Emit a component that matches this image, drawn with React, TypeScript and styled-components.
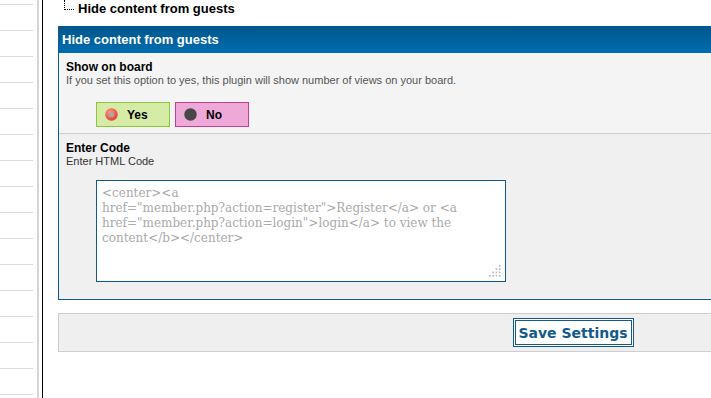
import React from "react";
import styled, { createGlobalStyle } from "styled-components";

const GlobalStyle = createGlobalStyle`
  html, body {
    margin: 0;
    padding: 0;
    background: #fff;
    overflow: hidden;
  }
  body {
    font-family: "Liberation Sans", Arial, sans-serif;
  }
`;

const sideItems = Array.from({ length: 17 }, (_, i) => i);

// word joiner after "?" keeps the url in one piece, like the original wrap
const htmlCode =
  '<center><a href="member.php?\u2060action=register">Register</a> or <a href="member.php?\u2060action=login">login</a> to view the content</b></center>';

const RadioIcon = ({ checked }: { checked: boolean }) =>
  checked ? (
    <svg width="13" height="13" viewBox="0 0 13 13">
      <defs>
        <radialGradient id="rg" cx="40%" cy="35%" r="70%">
          <stop offset="0%" stopColor="#ff9d8f" />
          <stop offset="100%" stopColor="#e2392b" />
        </radialGradient>
      </defs>
      <circle cx="6.5" cy="6.5" r="6.2" fill="url(#rg)" />
      <circle cx="6.5" cy="6.5" r="2.6" fill="#a9a9a9" />
    </svg>
  ) : (
    <svg width="13" height="13" viewBox="0 0 13 13">
      <circle cx="6.5" cy="6.5" r="6.2" fill="#474747" />
    </svg>
  );

const Grip = () => (
  <GripBox width="13" height="13" viewBox="0 0 13 13">
    {[0, 1, 2, 3].map((row) =>
      [0, 1, 2, 3]
        .filter((col) => col >= 3 - row)
        .map((col) => (
          <rect
            key={`${row}-${col}`}
            x={col * 3.3}
            y={row * 3.3}
            width="1.6"
            height="1.6"
            fill="#b5b5b5"
          />
        ))
    )}
  </GripBox>
);

const App = () => {
  return (
    <Page>
      <GlobalStyle />
      <Sidebar>
        <SideList>
          {sideItems.map((i) => (
            <SideItem key={i} />
          ))}
        </SideList>
      </Sidebar>
      <Main>
        <Crumb>
          <TreeLine />
          <CrumbText>Hide content from guests</CrumbText>
        </Crumb>

        <Panel>
          <PanelHeader>Hide content from guests</PanelHeader>

          <Row $bg="#f4f4f4" $divider>
            <Label>Show on board</Label>
            <Desc>If you set this option to yes, this plugin will show number of views on your board.</Desc>
            <Choices>
              <Choice $bg="#d5eba6" $border="#8cc63f">
                <RadioIcon checked />
                <span>Yes</span>
              </Choice>
              <Choice $bg="#eda9d7" $border="#c93d8c">
                <RadioIcon checked={false} />
                <span>No</span>
              </Choice>
            </Choices>
          </Row>

          <Row $bg="#f0f0f0">
            <Label>Enter Code</Label>
            <Desc $dark>Enter HTML Code</Desc>
            <CodeWrap>
              <CodeArea readOnly defaultValue={htmlCode} />
              <Grip />
            </CodeWrap>
          </Row>
        </Panel>

        <SaveBar>
          <SaveButton>Save Settings</SaveButton>
        </SaveBar>
      </Main>
    </Page>
  );
};

export default App;

const Page = styled.div`
  display: flex;
  width: 1200px;
  height: 398px;
`;

const Sidebar = styled.div`
  width: 37px;
  height: 100%;
  border-right: 2px solid #d7d7d7;
  margin-right: 3px;
  overflow: hidden;
`;

const SideList = styled.div`
  margin-top: -21px;
  width: 33px;
`;

const SideItem = styled.div`
  height: 25px;
  border-bottom: 1px solid #dcdcdc;
`;

const Main = styled.div`
  border-left: 1px solid #000;
  padding: 0 0 0 15px;
  width: 1030px;
`;

const Crumb = styled.div`
  display: flex;
  align-items: flex-start;
  height: 16px;
  padding-left: 6px;
`;

const TreeLine = styled.span`
  width: 9px;
  height: 9px;
  border-left: 1px dotted #000;
  border-bottom: 1px dotted #000;
  margin-right: 4px;
`;

const CrumbText = styled.span`
  font-size: 13px;
  font-weight: bold;
  line-height: 17px;
  color: #000;
`;

const Panel = styled.div`
  margin-top: 10px;
  border: 1px solid #0f5a8c;
  border-top: none;
`;

const PanelHeader = styled.div`
  height: 27px;
  line-height: 27px;
  padding-left: 3px;
  font-size: 13px;
  font-weight: bold;
  color: #fff;
  background: linear-gradient(to bottom, #02568a, #006db1);
`;

const Row = styled.div<{ $bg: string; $divider?: boolean }>`
  background: ${({ $bg }) => $bg};
  padding: 7px 7px ${({ $divider }) => ($divider ? "6px" : "17px")};
  border-bottom: ${({ $divider }) => ($divider ? "1px solid #cfcfcf" : "none")};
`;

const Label = styled.div`
  font-size: 12px;
  font-weight: bold;
  line-height: 14px;
  color: #000;
`;

const Desc = styled.div<{ $dark?: boolean }>`
  font-size: 11px;
  line-height: 13px;
  color: ${({ $dark }) => ($dark ? "#333" : "#555")};
`;

const Choices = styled.div`
  display: flex;
  gap: 5px;
  margin: 15px 0 0 30px;
`;

const Choice = styled.div<{ $bg: string; $border: string }>`
  display: flex;
  align-items: center;
  gap: 9px;
  box-sizing: border-box;
  width: 74px;
  height: 25px;
  padding-left: 8px;
  background: ${({ $bg }) => $bg};
  border: 1px solid ${({ $border }) => $border};
  font-size: 12px;
  font-weight: bold;
  color: #000;
`;

const CodeWrap = styled.div`
  position: relative;
  width: 410px;
  height: 102px;
  margin: 12px 0 0 30px;
`;

const CodeArea = styled.textarea`
  box-sizing: border-box;
  display: block;
  width: 100%;
  height: 100%;
  margin: 0;
  padding: 5px 18px 4px 5px;
  border: 1px solid #125a8b;
  border-radius: 0;
  background: #fff;
  color: #aaa;
  font-family: "DejaVu Serif", "Liberation Serif", serif;
  font-size: 12px;
  line-height: 15px;
  resize: none;
  outline: none;
  overflow: hidden;
`;

const GripBox = styled.svg`
  position: absolute;
  right: 4px;
  bottom: 4px;
`;

const SaveBar = styled.div`
  margin-top: 13px;
  display: flex;
  justify-content: center;
  padding: 4px;
  background: #efefef;
  border: 1px solid #cdcdcd;
`;

const SaveButton = styled.button`
  height: 29px;
  width: 121px;
  padding: 0;
  background: #fff;
  border: 3px double #15598c;
  border-radius: 0;
  font-family: "DejaVu Sans", Verdana, sans-serif;
  font-size: 14px;
  font-weight: bold;
  color: #135a8d;
  cursor: pointer;
`;
